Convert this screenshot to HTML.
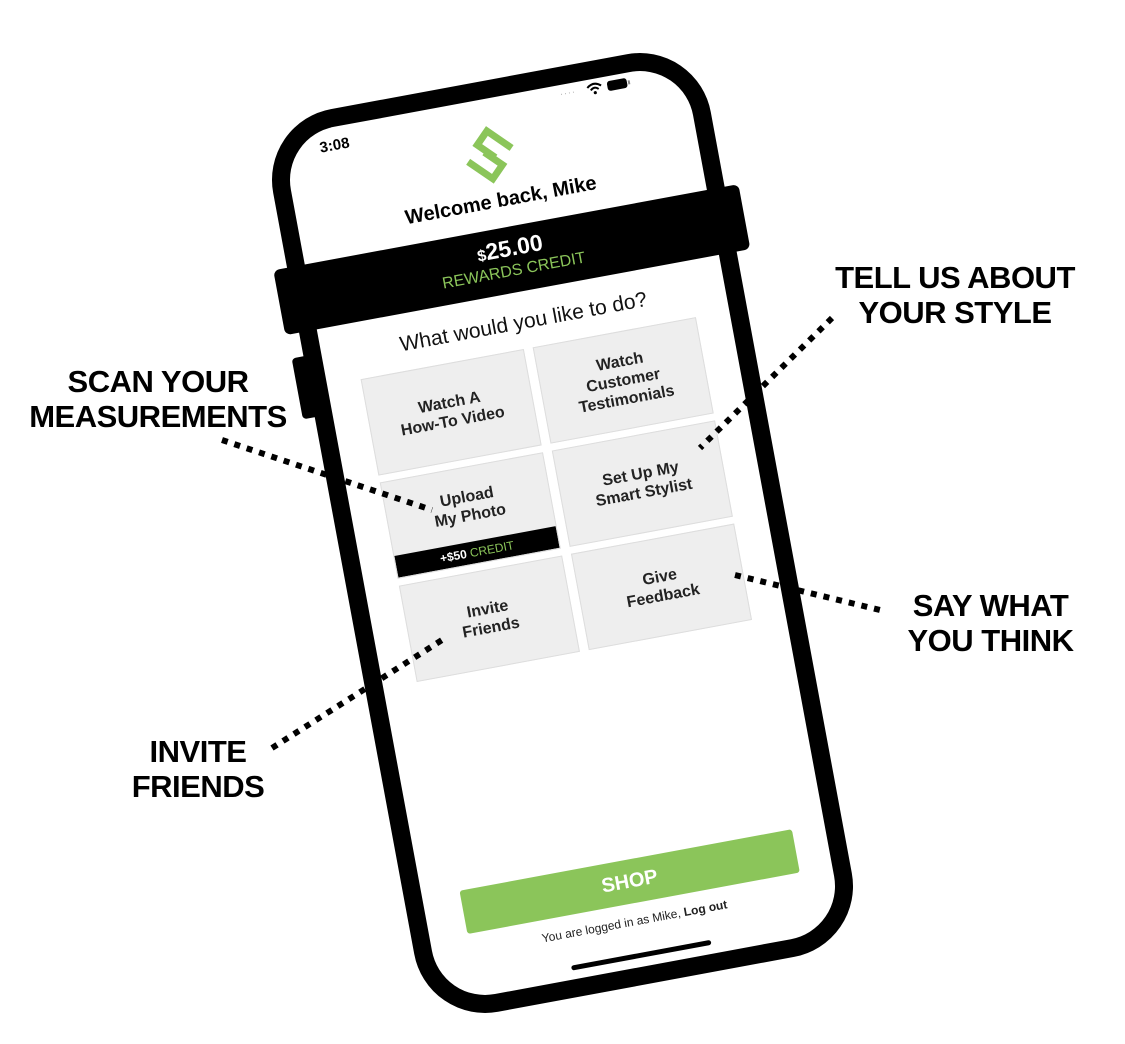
<!DOCTYPE html>
<html><head><meta charset="utf-8"><style>
body{margin:0;width:1125px;height:1044px;background:#fff;position:relative;overflow:hidden;font-family:"Liberation Sans",sans-serif}
.lab{position:absolute;font-weight:900;font-size:31px;line-height:35px;color:#000;letter-spacing:-0.5px;text-align:center;white-space:nowrap}
#ph{position:absolute;left:339.5px;top:74px;width:445px;height:918px;transform:rotate(-10.5deg)}
.frame{position:absolute;inset:0;border:18px solid #000;border-radius:72px;background:#fff}
.a{position:absolute}
.tile{position:absolute;width:166px;height:98px;background:#eee;border:1px solid #ddd;box-sizing:border-box;display:flex;align-items:center;justify-content:center;text-align:center;font-weight:bold;font-size:16px;line-height:19px;color:#222;overflow:hidden}
</style></head><body>

<div class="lab" style="left:22px;top:364px;width:272px">SCAN YOUR<br>MEASUREMENTS</div>
<div class="lab" style="left:826px;top:260px;width:258px">TELL US ABOUT<br>YOUR STYLE</div>
<div class="lab" style="left:898px;top:588px;width:185px">SAY WHAT<br>YOU THINK</div>
<div class="lab" style="left:128px;top:734px;width:140px">INVITE<br>FRIENDS</div>

<div id="ph">
  <div class="a" style="left:-12px;top:238px;width:20px;height:62px;background:#000;border-radius:4px"></div>
  <div class="frame"></div>
  <div class="a" style="left:54px;top:28px;font-weight:bold;font-size:15px">3:08</div>
  <div class="a" style="left:300px;top:22px;font-size:9px;color:#aaa;letter-spacing:1px">····</div>
  <svg class="a" style="left:326px;top:20px" width="60" height="16">
    <path d="M2 6 Q9 0 16 6" stroke="#000" stroke-width="2" fill="none"/><path d="M5 9 Q9 5 13 9" stroke="#000" stroke-width="2" fill="none"/><circle cx="9" cy="12" r="1.6"/>
    <rect x="22" y="3" width="20" height="10" rx="3" fill="#000"/><rect x="43" y="6" width="2" height="4" fill="#888"/>
  </svg>
  <svg class="a" style="left:188px;top:42px" width="64" height="64" viewBox="0 0 64 64">
    <g transform="rotate(45 32 32)" fill="none" stroke="#8bc55a" stroke-width="7" stroke-linejoin="miter">
      <path d="M46 14 H16 V31 H38"/><path d="M18 50 H48 V33 H26"/>
    </g>
  </svg>
  <div class="a" style="left:0;width:445px;top:110px;text-align:center;font-weight:bold;font-size:20px">Welcome back, Mike</div>
  <div class="a" style="left:-14px;top:148px;width:473px;height:66px;background:#000;border-radius:6px;text-align:center;color:#fff">
    <div style="font-weight:bold;font-size:23px;margin-top:8px"><span style="font-size:16px">$</span>25.00</div>
    <div style="color:#8bc55a;font-size:16px;margin-top:1px">REWARDS CREDIT</div>
  </div>
  <div class="a" style="left:0;width:445px;top:233px;text-align:center;font-size:21px;color:#111">What would you like to do?</div>
  <div class="tile" style="left:52px;top:271px">Watch A<br>How-To Video</div>
  <div class="tile" style="left:227px;top:271px">Watch<br>Customer<br>Testimonials</div>
  <div class="tile" style="left:52px;top:376px;flex-direction:column"><div style="margin-top:-18px">Upload<br>My Photo</div><div class="a" style="left:0;right:0;bottom:0;height:22px;background:#000;color:#fff;font-size:12px;line-height:22px">+$50 <span style="color:#8bc55a;font-weight:normal">CREDIT</span></div></div>
  <div class="tile" style="left:227px;top:376px">Set Up My<br>Smart Stylist</div>
  <div class="tile" style="left:52px;top:481px">Invite<br>Friends</div>
  <div class="tile" style="left:227px;top:481px">Give<br>Feedback</div>
  <div class="a" style="left:56px;top:792px;width:338px;height:44px;background:#8bc55a;border-radius:3px;color:#fff;font-weight:bold;font-size:20px;line-height:44px;text-align:center">SHOP</div>
  <div class="a" style="left:0;width:445px;top:847px;text-align:center;font-size:12px;color:#222">You are logged in as Mike, <b>Log out</b></div>
  <div class="a" style="left:152px;top:886px;width:142px;height:5px;background:#000;border-radius:3px"></div>
</div>

<svg class="a" style="left:0;top:0" width="1125" height="1044">
<g stroke="#000" stroke-width="6" stroke-dasharray="6 7" fill="none">
<line x1="222" y1="440" x2="432" y2="510"/>
<line x1="832" y1="318" x2="700" y2="448"/>
<line x1="735" y1="575" x2="880" y2="610"/>
<line x1="272" y1="748" x2="442" y2="640"/>
</g></svg>
</body></html>
